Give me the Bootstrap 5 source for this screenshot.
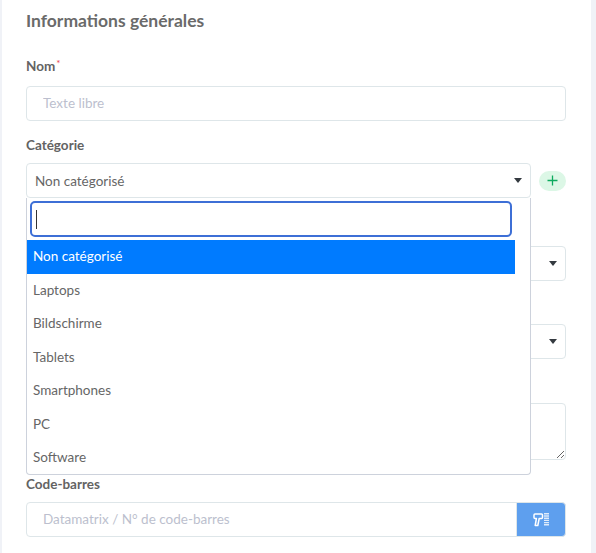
<!DOCTYPE html>
<html lang="fr">

<head>
  <meta charset="UTF-8" />
  <meta name="viewport" content="width=device-width, initial-scale=1.0" />
  <title>Informations générales</title>
  <link href="https://cdn.jsdelivr.net/npm/bootstrap@5.3.0/dist/css/bootstrap.min.css" rel="stylesheet" />
  <style>
    body {
      background: #f0f2f7;
      font-family: "Lato", sans-serif;
      font-size: 13.5px;
      color: #666;
      overflow: hidden;
    }

    .info-panel {
      width: 589px;
      height: 553px;
      margin-left: 2px;
      background: #fff;
      padding: 11px 25px 0 24px;
    }

    .info-title {
      font-size: 17.5px;
      font-weight: 700;
      line-height: 20px;
      color: #6a6a6a;
      margin: 0 0 26px;
    }

    .field-label {
      display: block;
      font-size: 13.5px;
      font-weight: 700;
      line-height: 18px;
      color: #636363;
      margin-bottom: 9px;
    }

    .field-name {
      margin-bottom: 11px;
    }

    .field-req {
      color: #e8414f;
      font-size: 10px;
      font-weight: 400;
      line-height: 0;
      vertical-align: 4px;
      margin-left: 1px;
    }

    .field-group {
      margin-bottom: 15px;
    }

    /* label of these fields sits behind the open menu */
    .field-covered {
      padding-top: 27px;
    }

    .field-cat {
      margin-bottom: 21px;
    }

    .field-gap1 {
      margin-bottom: 16px;
    }

    .field-gap2 {
      margin-bottom: 17px;
    }

    .info-panel .form-control,
    .info-panel .form-select {
      height: 35px;
      font-size: 13.5px;
      color: #666;
      border: 1px solid #dee6e9;
      border-radius: 4px;
    }

    .info-panel .form-control {
      padding: 0 16px 2px;
    }

    .info-panel .form-control::placeholder {
      color: #bcbfce;
    }

    .info-panel .form-select {
      padding: 1px 30px 0 8px;
      background-size: 8px 5px;
      background-position: right 8px center;
      background-image: url("data:image/svg+xml,%3csvg xmlns='http://www.w3.org/2000/svg' viewBox='0 0 8 5'%3e%3cpath fill='%23343a40' d='M0 0h8L4 5z'/%3e%3c/svg%3e");
    }

    .info-panel textarea.form-control {
      height: 57px;
      padding-top: 8px;
    }

    .add-pill {
      width: 27px;
      height: 20px;
      flex: none;
      padding: 0;
      border: 0;
      border-radius: 10px;
      background: #dcf7e6;
      color: #0caa5e;
    }

    .add-pill svg {
      display: block;
      margin: auto;
    }

    .cat-wrap {
      position: relative;
    }

    .cat-menu {
      position: absolute;
      z-index: 10;
      top: 35px;
      left: 0;
      width: 505px;
      height: 277px;
      background: #fff;
      border: 1px solid #cdd2dc;
      border-top: 0;
      border-radius: 0 0 4px 4px;
      padding-top: 3px;
    }

    .cat-search-box {
      position: relative;
      width: 482px;
      height: 36px;
      margin: 0 0 3px 3px;
    }

    .cat-search {
      display: block;
      width: 100%;
      height: 100%;
      border: 2px solid #3d6fd6;
      border-radius: 5px;
      outline: 0;
      padding: 0 4px;
    }

    .cat-caret {
      position: absolute;
      top: 9px;
      left: 6px;
      width: 1px;
      height: 19px;
      background: #333;
    }

    .cat-list {
      width: 488px;
      list-style: none;
      margin: 0;
      padding: 0;
    }

    .cat-list li {
      height: 33.4px;
      line-height: 32px;
      padding-left: 6px;
      color: #666;
    }

    .cat-list li.is-current {
      height: 34px;
      line-height: 32px;
      background: #007bff;
      color: #fff;
    }

    .scan-btn {
      width: 50px;
      flex: none;
      padding: 0;
      border: 1px solid #dee6e9;
      border-radius: 0 4px 4px 0;
      background: #5e9fee;
    }

    .scan-btn svg {
      display: block;
      margin: auto;
    }

    .input-group .form-control {
      border-radius: 4px 0 0 4px;
    }
  </style>
</head>

<body>
  <div class="info-panel">
    <h2 class="info-title">Informations générales</h2>
    <form>
      <div class="field-group">
        <label class="field-label field-name">Nom<span class="field-req">*</span></label>
        <input type="text" class="form-control" placeholder="Texte libre" />
      </div>

      <div class="field-group field-cat">
        <label class="field-label">Catégorie</label>
        <div class="d-flex align-items-center gap-2">
          <div class="cat-wrap flex-grow-1">
            <select class="form-select">
              <option>Non catégorisé</option>
            </select>
            <div class="cat-menu">
              <div class="cat-search-box">
                <input type="text" class="cat-search" />
                <span class="cat-caret"></span>
              </div>
              <ul class="cat-list">
                <li class="is-current">Non catégorisé</li>
                <li>Laptops</li>
                <li>Bildschirme</li>
                <li>Tablets</li>
                <li>Smartphones</li>
                <li>PC</li>
                <li>Software</li>
              </ul>
            </div>
          </div>
          <button type="button" class="add-pill">
            <svg width="11" height="11" viewBox="0 0 11 11">
              <path d="M5.5 0.5v10M0.5 5.5h10" stroke="currentColor" stroke-width="1.3" fill="none" />
            </svg>
          </button>
        </div>
      </div>

      <div class="field-group field-covered field-gap1">
        <select class="form-select">
          <option></option>
        </select>
      </div>

      <div class="field-group field-covered field-gap2">
        <select class="form-select">
          <option></option>
        </select>
      </div>

      <div class="field-group field-covered">
        <textarea class="form-control"></textarea>
      </div>

      <div class="field-group">
        <label class="field-label">Code-barres</label>
        <div class="input-group">
          <input type="text" class="form-control" placeholder="Datamatrix / N° de code-barres" />
          <button type="button" class="scan-btn">
            <svg width="16" height="14" viewBox="0 0 16 14">
              <path d="M2 1h6.5a1 1 0 0 1 1 1v2.5a1 1 0 0 1-1 1H6.2L4.8 12.5H2.2L3.4 5.5H2a1 1 0 0 1-1-1V2a1 1 0 0 1 1-1z" fill="none" stroke="#fff" stroke-width="1.5" stroke-linejoin="round" />
              <path d="M11 .8h5M11 3h5M11 5.2h5M11 7.4h5M11 9.6h5M11 11.8h5" stroke="#fff" stroke-width="1.4" opacity=".8" />
            </svg>
          </button>
        </div>
      </div>
    </form>
  </div>
</body>

</html>
